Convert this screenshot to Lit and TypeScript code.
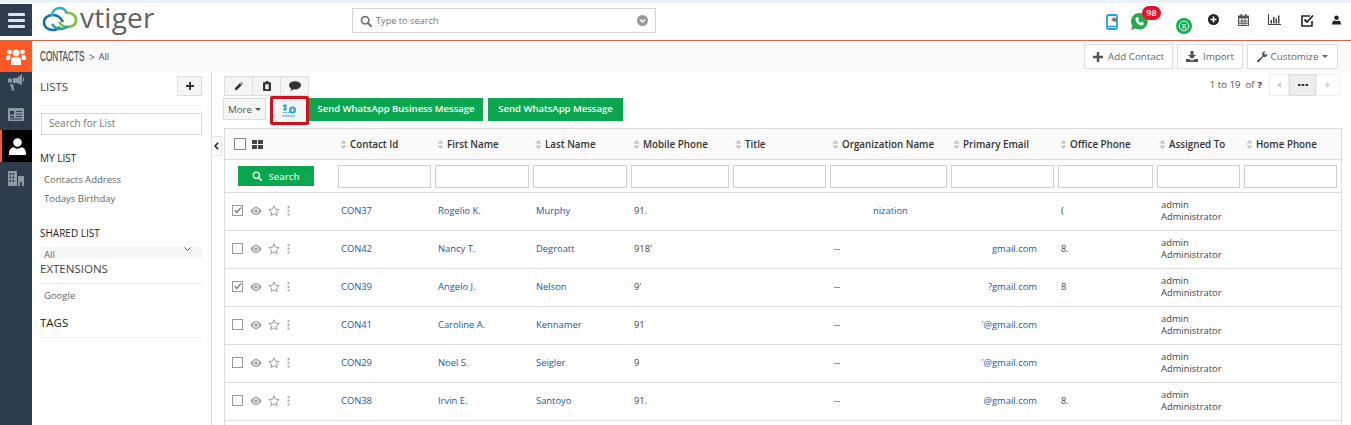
import { LitElement, html, svg, css } from 'lit';
import { customElement } from 'lit/decorators.js';

const ic = (w: number, h: number, vb: string, body: unknown, fill = 'currentColor') =>
  html`<svg width="${w}" height="${h}" viewBox="${vb}" fill="${fill}" style="display:block;flex:none">${body}</svg>`;

const sortIcon = ic(7, 9, '0 0 7 10', svg`<path d="M3.500 0 7 4H0zM3.500 10 0 6h7z" fill="#c4c4c4"/>`);
const searchPath = svg`<circle cx="6.500" cy="6.500" r="4.600" fill="none" stroke="currentColor" stroke-width="2.200"/><path d="m10 10 4 4" stroke="currentColor" stroke-width="2.600" stroke-linecap="round"/>`;
const pencil = ic(9, 9, '0 0 14 14', svg`<path d="M1 13l1-4 7-7 3 3-7 7zM10 1l1-1 3 3-1 1z"/>`);
const trash = ic(8, 10, '0 0 12 15', svg`<path fill-rule="evenodd" d="M4 0h4v2h3a1 1 0 0 1 1 1v11a1 1 0 0 1-1 1H1a1 1 0 0 1-1-1V3a1 1 0 0 1 1-1h3zM3.500 5v7.500h5V5z"/>`);
const bubble = ic(12, 10, '0 0 16 13', svg`<ellipse cx="8" cy="5.500" rx="8" ry="5.500"/><path d="M3 9 2 13l5-3z"/>`);
const userSolid = ic(17, 17, '0 0 16 16', svg`<circle cx="8" cy="4.200" r="4"/><path d="M0 15c0-4 2-6 4.500-6.200 1 .8 2.200 1.200 3.500 1.200s2.500-.4 3.500-1.200C14 9 16 11 16 15c0 .6-.5 1-1 1H1c-.5 0-1-.4-1-1z"/>`);
const waPhone = svg`<path d="M5.300 4.300l1.700-.4 1 2.300-.9 1c.5 1.100 1.300 1.900 2.500 2.500l1-.9 2.200 1-.4 1.700c-.3.800-1.300 1.100-2.200.9C7.200 11.800 5 9.600 4.500 6.500c-.1-.9.100-1.800.8-2.200z" fill="#fff"/>`;

const columns = [
  'Contact Id', 'First Name', 'Last Name', 'Mobile Phone', 'Title',
  'Organization Name', 'Primary Email', 'Office Phone', 'Assigned To', 'Home Phone',
];

const rows = [
  { id: 'CON37', first: 'Rogelio K.', last: 'Murphy', mobile: '91.', org: 'nization', email: '', office: '(', checked: true },
  { id: 'CON42', first: 'Nancy T.', last: 'Degroatt', mobile: "918'", org: '--', email: 'gmail.com', office: '8.', checked: false },
  { id: 'CON39', first: 'Angelo J.', last: 'Nelson', mobile: "9'", org: '--', email: '?gmail.com', office: '8', checked: true },
  { id: 'CON41', first: 'Caroline A.', last: 'Kennamer', mobile: '91', org: '--', email: "'@gmail.com", office: '', checked: false },
  { id: 'CON29', first: 'Noel S.', last: 'Seigler', mobile: '9', org: '--', email: "'@gmail.com", office: '', checked: false },
  { id: 'CON38', first: 'Irvin E.', last: 'Santoyo', mobile: '91.', org: '--', email: '@gmail.com', office: '8.', checked: false },
];

@customElement('app-root')
export class AppRoot extends LitElement {
  static styles = css`
    :host {
      display: block;
      width: 1351px;
      height: 425px;
      overflow: hidden;
      background: #fff;
      font-family: 'Open Sans', sans-serif;
      font-size: 10px;
      color: #555;
    }
    .strip { height: 3px; background: #e9f2f9; }
    .top {
      height: 37px;
      display: flex;
      border-bottom: 1px solid #d2694f;
      box-sizing: content-box;
    }
    .burger {
      width: 32px;
      height: 32px;
      margin-top: 1px;
      background: #2c3e4e;
      display: flex;
      flex-direction: column;
      justify-content: center;
      align-items: center;
      gap: 3px;
    }
    .burger i { width: 17px; height: 3px; background: #dfe3e6; border-radius: 1px; }
    .logo { display: flex; align-items: flex-start; margin-left: 10px; padding-top: 2px; width: 310px; }
    .logo span {
      font-size: 28px;
      line-height: 30px;
      color: #5f6163;
      margin-left: 2px;
      margin-top: -3px;
      letter-spacing: 0.2px;
    }
    .global {
      width: 304px;
      height: 25px;
      margin-top: 5px;
      box-sizing: border-box;
      border: 1px solid #d5d5d5;
      display: flex;
      align-items: center;
      padding: 0 7px;
      gap: 4px;
      color: #777;
      font-size: 9.2px;
    }
    .global span { flex: 1; }
    .tools { margin-left: auto; display: flex; align-items: center; height: 37px; color: #333; padding-right: 10px; }
    .badge-wrap { position: relative; }
    .badge {
      position: absolute;
      left: 11px;
      top: -7px;
      width: 19px;
      height: 14px;
      border-radius: 7px;
      background: #e8112d;
      color: #fff;
      font-size: 9px;
      font-weight: 600;
      text-align: center;
      line-height: 14px;
    }
    .crumb {
      height: 31px;
      display: flex;
      background: #fafafa;
      align-items: center;
    }
    .modicon {
      width: 32px;
      height: 31px;
      background: #ff5a26;
      display: flex;
      align-items: center;
      justify-content: center;
      color: #fff;
    }
    .crumb h1 {
      margin: 0 0 2px 8px;
      font: 400 14px 'Liberation Sans', sans-serif;
      color: #4a545c;
      display: inline-block;
      width: 45px;
      overflow: visible;
      transform: scaleX(0.585);
      transform-origin: left;
      white-space: nowrap;
      -webkit-text-stroke: 0.25px #4a545c;
    }
    .crumb .sep { margin-left: 4px; font-size: 10px; color: #555; }
    .crumb .all { margin-left: 4px; font-size: 9px; color: #444; }
    .actions { margin-left: auto; margin-right: 13px; display: flex; gap: 4px; }
    .actions button {
      height: 25px;
      display: flex;
      align-items: center;
      justify-content: center;
      gap: 5px;
      background: #fff;
      border: 1px solid #ddd;
      font: 9.8px 'Open Sans', sans-serif;
      color: #666;
      padding: 0;
    }
    .actions .custom { width: 91px; gap: 3px; }
    .body { display: flex; height: 353px; }
    .rail { width: 32px; background: #2c3e4e; color: #8d99a3; display: flex; flex-direction: column; }
    .rail div { display: flex; align-items: center; justify-content: center; height: 32px; }
    .rail .first { height: 26px; align-items: flex-start; padding-top: 2px; box-sizing: border-box; }
    .rail .on { background: #000; color: #fff; border-left: 2px solid #ff5a26; box-sizing: border-box; }
    .lists {
      box-sizing: content-box;
      border-right: 1px solid #ddd;
      padding-left: 8px;
      width: 162px;
      padding-right: 9px;
    }
    .lhead {
      display: flex;
      justify-content: space-between;
      align-items: center;
      height: 28px;
      padding-bottom: 5px;
      border-bottom: 1px solid #eee;
      font-size: 11.5px;
      color: #444;
      box-sizing: content-box;
    }
    .lhead span { margin-top: 1px; }
    .plus {
      width: 25px;
      height: 20px;
      background: #f5f5f5;
      border: 1px solid #ddd;
      box-sizing: border-box;
      display: flex;
      align-items: center;
      justify-content: center;
      color: #333;
    }
    .lsearch {
      margin: 7px 0 0 1px;
      height: 22px;
      border: 1px solid #d5d5d5;
      box-sizing: border-box;
      padding-left: 7px;
      line-height: 19px;
      font-size: 10px;
      color: #777;
    }
    .sub { color: #222; font-size: 10px; line-height: 14px; }
    .link { color: #666; font-size: 9.5px; line-height: 14px; padding-left: 4px; }
    .select {
      height: 11px;
      margin-top: 7px;
      background: #f6f6f6;
      overflow: hidden;
      padding: 0 11px 0 4px;
      display: flex;
      justify-content: space-between;
      font-size: 9.5px;
      line-height: 15px;
      color: #666;
    }
    .section { font-size: 11.5px; line-height: 16px; color: #444; border-bottom: 1px solid #eee; box-sizing: border-box; }
    .main { flex: 1; min-width: 0; display: flex; flex-direction: column; }
    .bar1 { display: flex; justify-content: space-between; height: 24px; padding: 4px 11px 0 12px; box-sizing: content-box; }
    .group { display: flex; height: 20px; }
    .group div {
      width: 27px;
      background: #f5f5f5;
      border: 1px solid #ddd;
      margin-left: -1px;
      display: flex;
      align-items: center;
      justify-content: center;
      color: #333;
      box-sizing: content-box;
      height: 18px;
    }
    .group div:first-child { margin-left: 0; }
    .pager { display: flex; align-items: center; margin-top: -3px; height: 23px; color: #555; font-size: 9.6px; }
    .pager b { color: #333; margin-left: 3px; }
    .pg { display: flex; margin-left: 7px; height: 22px; }
    .pg div { display: flex; align-items: center; justify-content: center; border: 1px solid #f1f1f1; color: #bbb; box-sizing: border-box; height: 22px; }
    .pg .more { width: 27px; background: #eee; border-color: #ddd; color: #333; }
    .bar2 { display: flex; align-items: center; height: 29px; padding-left: 11px; margin-top: -4px; }
    .more-btn {
      width: 43px;
      height: 22px;
      margin-top: -3px;
      box-sizing: border-box;
      background: #f5f5f5;
      border: 1px solid #ddd;
      display: flex;
      align-items: center;
      justify-content: center;
      gap: 3px;
      color: #555;
      font-size: 9.8px;
    }
    .caret { width: 0; height: 0; border: 3px solid transparent; border-top-color: currentColor; border-bottom: 0; }
    .hl {
      width: 39px;
      height: 29px;
      margin-left: 4px;
      box-sizing: border-box;
      border: 3px solid #d3111b;
      border-radius: 2px;
      background: #f5f5f5;
      display: flex;
      align-items: center;
      justify-content: center;
    }
    .wa {
      height: 23px;
      margin-top: -2px;
      padding: 0 0 2px;
      box-sizing: border-box;
      background: #0aa650;
      color: #fff;
      border: 0;
      font: 600 9.5px 'Open Sans', sans-serif;
      display: flex;
      align-items: center;
      justify-content: center;
    }
    .content { display: flex; margin-top: 3px; flex: 1; }
    .collapse {
      width: 9px;
      height: 18px;
      margin-top: 8px;
      border: 1px solid #e5e5e5;
      border-left: 0;
      box-sizing: content-box;
      display: flex;
      align-items: center;
      justify-content: center;
      color: #222;
    }
    .table {
      margin-left: 2px;
      width: 1118px;
      box-sizing: border-box;
      border-left: 1px solid #ddd;
      border-right: 1px solid #ddd;
    }
    .row {
      display: grid;
      grid-template-columns: 113px 97px 98px 98px 102px 97px 121px 107px 99px 87px 97px;
      border-bottom: 1px solid #ddd;
      box-sizing: border-box;
    }
    .head { height: 32px; border-top: 1px solid #ddd; background: #fafafa; align-items: center; color: #333; font-weight: 600; }
    .head .c { display: flex; align-items: center; gap: 3px; padding-left: 2px; white-space: nowrap; font-size: 9.8px; }
    .head .sel { display: flex; align-items: center; gap: 6px; padding-left: 9px; }
    .box { width: 10px; height: 10px; border: 1px solid #888; background: #fff; box-sizing: content-box; }
    .filter { height: 33px; align-items: center; }
    .filter input {
      display: block;
      height: 23px;
      width: calc(100% - 4px);
      box-sizing: border-box;
      border: 1px solid #cfcfcf;
      margin: 0;
      padding: 0;
      background: #fff;
    }
    .sbtn {
      margin-left: 13px;
      width: 76px;
      height: 20px;
      background: #0aa650;
      color: #d8f3e2;
      display: flex;
      align-items: center;
      justify-content: center;
      gap: 6px;
      font-weight: 600;
      font-size: 9.5px;
    }
    .data { height: 38px; padding-bottom: 2px; align-items: center; font-size: 9.4px; color: #17599f; }
    .data .t { padding-left: 3px; white-space: nowrap; }
    .data .plain { color: #444; }
    .marks { display: flex; align-items: center; color: #888; padding-left: 7px; gap: 6.500px; }
    .data .org { padding-left: 43px; }
    .data .dash { padding-left: 4px; color: #333; }
    .data .email { text-align: right; padding-right: 21px; }
    .who { line-height: 12px; font-size: 9.4px; color: #444; padding-left: 4px; }
  `;

  private checkbox(checked: boolean) {
    return ic(11, 11, '0 0 11 11', svg`
      <rect x=".5" y=".5" width="10" height="10" fill="#fff" stroke="#999"/>
      ${checked ? svg`<path d="M2.500 5l2.300 2.500L9 2.500" fill="none" stroke="#777" stroke-width="1.200"/>` : ''}`);
  }

  private renderRow(r: (typeof rows)[number]) {
    return html`<div class="row data">
      <div class="marks">
        ${this.checkbox(r.checked)}
        ${ic(12, 8, '0 0 14 10', svg`<path d="M0 5c2-3 4.500-5 7-5s5 2 7 5c-2 3-4.500 5-7 5S2 8 0 5z" fill="#a0a0a0"/><circle cx="7" cy="5" r="3.400" fill="#fff"/><circle cx="7" cy="5" r="2.100" fill="#999"/>`)}
        ${ic(12, 11, '0 0 14 13', svg`<path d="M7 1l1.800 3.900 4.200.5-3.100 2.900.8 4.200L7 10.500l-3.700 2 .8-4.200L1 5.400l4.200-.5z" fill="none" stroke="#888"/>`)}
        ${ic(3, 10, '0 0 3 11', svg`<rect x=".5" width="2" height="2.500" fill="#aaa"/><rect x=".5" y="4" width="2" height="2.500" fill="#aaa"/><rect x=".5" y="8" width="2" height="2.500" fill="#aaa"/>`)}
      </div>
      <div class="t">${r.id}</div>
      <div class="t">${r.first}</div>
      <div class="t">${r.last}</div>
      <div class="t plain">${r.mobile}</div>
      <div></div>
      <div class="${r.org === '--' ? 'dash' : 'org'}">${r.org}</div>
      <div class="email">${r.email}</div>
      <div class="t plain">${r.office}</div>
      <div class="who">admin<br />Administrator</div>
      <div></div>
    </div>`;
  }

  render() {
    return html`
      <div class="strip"></div>
      <div class="top">
        <div class="burger"><i></i><i></i><i></i></div>
        <div class="logo">
          ${ic(36, 28, '0 0 36 28', svg`
            <path d="M21 17c-2-4-6-7-10-7-5 0-9 3-9 7.500S6 25 11 25c3 0 5-1 7-3" fill="none" stroke="#1d6fa3" stroke-width="2.600"/>
            <path d="M10 11c0-5 3.500-8 7.500-8 3 0 6 2 7 5" fill="none" stroke="#2fb4c4" stroke-width="2.600"/>
            <path d="M24 8c5-1 10 2 10 7s-4 7-9 7c-4 0-6-2-8-5" fill="none" stroke="#79c043" stroke-width="2.600"/>
            <path d="M10 19c2 3 4 5 8 5 4 0 6-1 8-3" fill="none" stroke="#1fa6a0" stroke-width="2.400"/>`, 'none')}
          <span>vtiger</span>
        </div>
        <div class="global">
          ${ic(12, 12, '0 0 15 15', searchPath)}
          <span>Type to search</span>
          ${ic(11, 11, '0 0 11 11', svg`<circle cx="5.500" cy="5.500" r="5.500" fill="#999"/><path d="M3 4.500l2.500 2.500L8 4.500" fill="none" stroke="#fff" stroke-width="1.500"/>`)}
        </div>
        <div class="tools">
          ${ic(13, 16, '0 0 13 16', svg`<rect x="1" y="1" width="10" height="14" rx="1.500" fill="#fff" stroke="#2a9fe0" stroke-width="1.800"/><path d="M1 12.500h10" stroke="#2a9fe0" stroke-width="1.500"/><path d="M5 6l3-3 4 3.500-3 1.500z" fill="#777"/>`)}
          <div class="badge-wrap" style="margin-left:12px">
            ${ic(17, 17, '0 0 17 17', svg`<path d="M8.500 0a8.300 8.300 0 0 1 0 16.600c-1.500 0-2.900-.4-4.100-1L0 17l1.400-4.200A8.300 8.300 0 0 1 8.500 0z" fill="#2aa84f"/>${waPhone}`)}
            <div class="badge">98</div>
          </div>
          <div style="margin:9px 0 0 28px">
            ${ic(16, 16, '0 0 16 16', svg`<circle cx="8" cy="8" r="8" fill="#0cb04a"/><circle cx="8" cy="8" r="4.800" fill="none" stroke="#fff"/><text x="8" y="10.500" text-anchor="middle" font-size="7" font-family="Open Sans" fill="#fff">B</text>`)}
          </div>
          <div style="margin:-4px 0 0 16px">
            ${ic(11, 11, '0 0 11 11', svg`<circle cx="5.500" cy="5.500" r="5.500" fill="#222"/><path d="M5.500 2.500v6M2.500 5.500h6" stroke="#fff" stroke-width="1.600"/>`)}
          </div>
          <div style="margin:-4px 0 0 19px">
            ${ic(11, 12, '0 0 11 12', svg`<path d="M0 1.500h11V12H0zM1 4.500v6.500h9V4.500z" fill="#555"/><path d="M2.500 0h1.500v3H2.500zM7 0h1.500v3H7zM1 6.500h9v1H1zM1 8.700h9v1H1zM3.500 4.500h1V11h-1zM6.500 4.500h1V11h-1z" fill="#555"/>`)}
          </div>
          <div style="margin:-5px 0 0 19px">
            ${ic(13, 11, '0 0 13 11', svg`<path d="M0 0h1v10h12v1H0zM2.500 6h1.500v3.500H2.500zM5 3h1.500v6.500H5zM7.500 4.500H9v5H7.500zM10 1.500h1.500v8H10z" fill="#444"/>`)}
          </div>
          <div style="margin:-3px 0 0 20px">
            ${ic(13, 13, '0 0 13 13', svg`<path d="M11 7v5H1V2h8" fill="none" stroke="#222" stroke-width="1.600"/><path d="M3.500 5.500l2.500 2.500 6-6.500" fill="none" stroke="#222" stroke-width="1.800"/>`)}
          </div>
          <div style="margin:-4px 0 0 18px">
            ${ic(9, 10, '0 0 16 16', svg`<circle cx="8" cy="4.200" r="4"/><path d="M0 16c0-5 2-7 4.500-7.200 2 1.500 5 1.500 7 0C14 9 16 11 16 16z"/>`, '#222')}
          </div>
        </div>
      </div>
      <div class="crumb">
        <div class="modicon">
          ${ic(20, 17, '0 0 20 17', svg`<circle cx="10" cy="5" r="3.400"/><circle cx="3.500" cy="4" r="2.400"/><circle cx="16.500" cy="4" r="2.400"/><path d="M5 17v-4c0-2.500 1.500-4 2.500-4 1.500.7 3.500.7 5 0 1 0 2.500 1.500 2.500 4v4zM0 11c0-2 1-4 2-4 .8.5 2 .5 2.800.2L4 12H0zM20 11c0-2-1-4-2-4-.8.5-2 .5-2.800.2L16 12h4z"/>`)}
        </div>
        <h1>CONTACTS</h1>
        <span class="sep">&gt;</span><span class="all">All</span>
        <div class="actions">
          <button style="width:89px">${ic(10, 10, '0 0 10 10', svg`<path d="M3.800 0h2.400v3.800H10v2.400H6.200V10H3.800V6.200H0V3.800h3.800z" fill="#555"/>`)}Add Contact</button>
          <button style="width:66px">${ic(12, 11, '0 0 12 11', svg`<path d="M4.500 0h3v4H10L6 8 2 4h2.500zM0 8h3l3 1.500L9 8h3v3H0z" fill="#555"/>`)}Import</button>
          <button class="custom">${ic(11, 11, '0 0 12 12', svg`<path d="M11.500 3a3.500 3.500 0 0 1-4.700 3.300L2.500 11.800a1 1 0 0 1-2-1.700L6 5.400A3.500 3.500 0 0 1 9.500.2L7.500 2.500 9.200 4.200z" fill="#555"/>`)}Customize<span class="caret" style="margin-left:1px"></span></button>
        </div>
      </div>
      <div class="body">
        <div class="rail">
          <div class="first">${ic(16, 17, '0 0 16 17', svg`<path d="M14 0v11L9 9H5V4h4zM0 4.500h4v4H0zM2 10h3l1.500 6.500H4zM15 3.500h1v4h-1z"/>`)}</div>
          <div>${ic(16, 13, '0 0 16 13', svg`<path fill-rule="evenodd" d="M1 0h14a1 1 0 0 1 1 1v11a1 1 0 0 1-1 1H1a1 1 0 0 1-1-1V1a1 1 0 0 1 1-1zM2 3v3.500h4V3zm6 0v1h6V3zm0 2.500v1h6v-1zM2 8v1.500h4V8zm6 0v1h6V8zM2 10.500v1h12v-1z"/>`)}</div>
          <div class="on">${userSolid}</div>
          <div>${ic(16, 15, '0 0 16 15', svg`<path fill-rule="evenodd" d="M0 0h9v15H0zM1.500 2v2H3V2zm3 0v2H6V2zm-3 3.500v2H3v-2zm3 0v2H6v-2zm-3 3.500v2H3V9zm3 0v2H6V9zM10 5h6v10h-2v-4h-2v4h-2z"/>`)}</div>
        </div>
        <div class="lists">
          <div class="lhead"><span>LISTS</span><div class="plus">${ic(8, 8, '0 0 10 10', svg`<path d="M3.800 0h2.400v3.800H10v2.400H6.200V10H3.800V6.200H0V3.800h3.800z"/>`)}</div></div>
          <div class="lsearch">Search for List</div>
          <div class="sub" style="margin-top:16px">MY LIST</div>
          <div class="link" style="margin-top:8px">Contacts Address</div>
          <div class="link" style="margin-top:5px">Todays Birthday</div>
          <div class="sub" style="margin-top:20px">SHARED LIST</div>
          <div class="select"><span>All</span>${ic(7, 5, '0 0 7 5', svg`<path d="M.5 .5 3.500 3.500 6.500 .5" fill="none" stroke="#555"/>`)}</div>
          <div class="section" style="height:26px;padding-top:3px">EXTENSIONS</div>
          <div class="link" style="margin-top:5px">Google</div>
          <div class="section" style="margin-top:10px;height:25px;color:#222;padding-top:2px">TAGS</div>
        </div>
        <div class="main">
          <div class="bar1">
            <div class="group"><div>${pencil}</div><div>${trash}</div><div>${bubble}</div></div>
            <div class="pager">
              1 to 19&nbsp; of <b>?</b>
              <div class="pg">
                <div style="width:20px">${ic(4, 6, '0 0 4 6', svg`<path d="M4 0v6L0 3z" fill="#ccc"/>`)}</div>
                <div class="more">${ic(10, 2, '0 0 10 2', svg`<path d="M0 0h2.500v2H0zM3.700 0h2.500v2H3.700zM7.500 0H10v2H7.500z" fill="#333"/>`)}</div>
                <div style="width:24px">${ic(4, 6, '0 0 4 6', svg`<path d="M0 0v6l4-3z" fill="#ccc"/>`)}</div>
              </div>
            </div>
          </div>
          <div class="bar2">
            <div class="more-btn">More<span class="caret"></span></div>
            <div class="hl">
              ${ic(15, 13, '0 0 15 13', svg`<circle cx="3" cy="2" r="1.800" fill="#2a9fe0"/><path d="M1.500 4h3v2.500h-3z" fill="#2a9fe0"/><path d="M1 8.500h6" stroke="#2a9fe0" stroke-dasharray="1.500 1"/><path d="M0 12h13" stroke="#4aa8d8"/><circle cx="10.500" cy="6" r="3.500" fill="#2a9fe0"/><path d="M10.500 4v4M8.500 6h4" stroke="#d9f0fb"/>`)}
            </div>
            <div class="wa" style="width:174px">Send WhatsApp Business Message</div>
            <div class="wa" style="width:135px;margin-left:5px">Send WhatsApp Message</div>
          </div>
          <div class="content">
            <div class="collapse">${ic(5, 8, '0 0 5 8', svg`<path d="M4.200 .7 1 4l3.200 3.300" fill="none" stroke="#222" stroke-width="1.600"/>`)}</div>
            <div class="table">
              <div class="row head">
                <div class="sel">
                  <div class="box"></div>
                  ${ic(11, 9, '0 0 11 9', svg`<path d="M0 0h5v4H0zM6 0h5v4H6zM0 5h5v4H0zM6 5h5v4H6z" fill="#444"/>`)}
                </div>
                ${columns.map((c) => html`<div class="c">${sortIcon}${c}</div>`)}
              </div>
              <div class="row filter">
                <div><div class="sbtn">${ic(10, 10, '0 0 15 15', searchPath, '#fff')}Search</div></div>
                ${columns.map(() => html`<div><input /></div>`)}
              </div>
              ${rows.map((r) => this.renderRow(r))}
            </div>
          </div>
        </div>
      </div>
    `;
  }
}
